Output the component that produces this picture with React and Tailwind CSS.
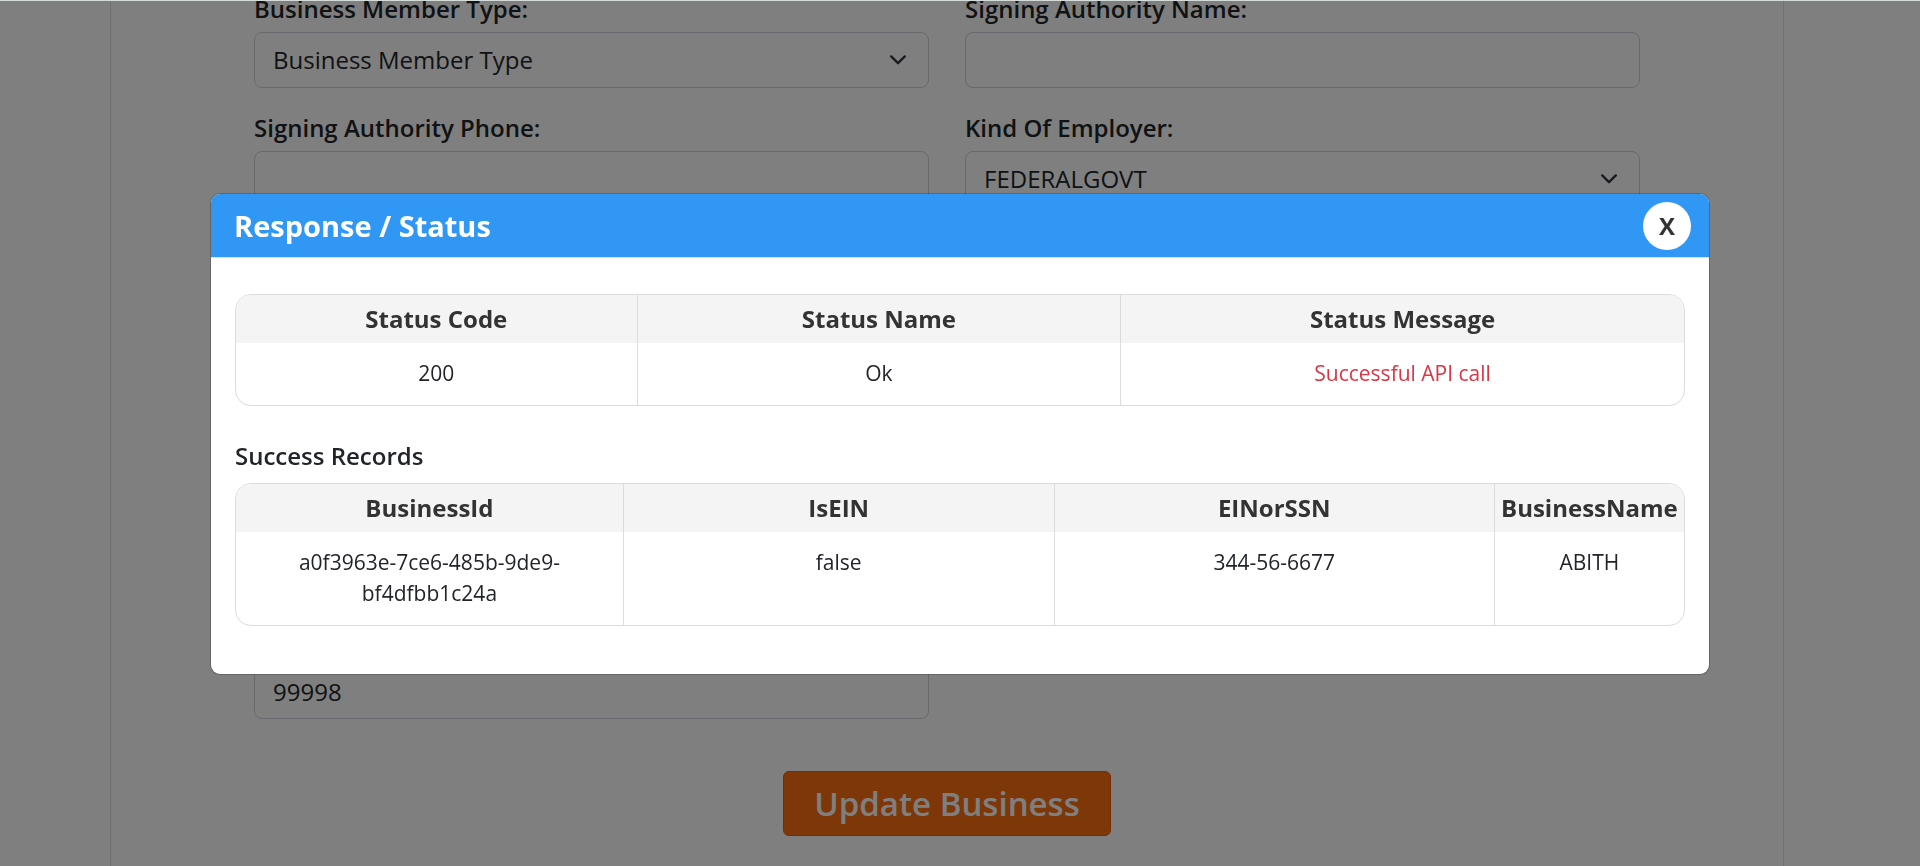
import { useState } from "react";

const controlClass =
  "block h-14 w-full rounded-lg border border-[#ced4da] bg-white px-[18px] text-2xl text-[#212529]";

function Field({ id, label, children }) {
  return (
    <div className="flex flex-col gap-[5px]">
      <label htmlFor={id} className="text-2xl/9 font-semibold text-[#212529]">
        {label}
      </label>
      {children}
    </div>
  );
}

function TextField({ id, label, initial = "" }) {
  return (
    <Field id={id} label={label}>
      <input id={id} type="text" defaultValue={initial} className={controlClass} />
    </Field>
  );
}

function SelectField({ id, label, option }) {
  return (
    <Field id={id} label={label}>
      <div className="relative">
        <select id={id} className={controlClass + " appearance-none"}>
          <option>{option}</option>
        </select>
        <svg
          viewBox="0 0 16 16"
          className="pointer-events-none absolute top-5 right-[23px] size-4"
          fill="none"
          stroke="#343a40"
          strokeWidth="2.4"
          strokeLinecap="round"
          strokeLinejoin="round"
          aria-hidden="true"
        >
          <path d="m1.2 4.4 6.8 6.8 6.8-6.8" />
        </svg>
      </div>
    </Field>
  );
}

function ResultTable({ columns }) {
  return (
    <div className="overflow-hidden rounded-2xl border border-[#dcdcdc]">
      <table className="w-full table-fixed text-center">
        <colgroup>
          {columns.map((c) => (
            <col key={c.title} className={c.width} />
          ))}
        </colgroup>
        <thead>
          <tr className="bg-[#f4f4f4]">
            {columns.map((c) => (
              <th
                key={c.title}
                scope="col"
                className="border-r border-[#dcdcdc] py-1.5 text-2xl/9 font-bold text-[#333] last:border-r-0"
              >
                {c.title}
              </th>
            ))}
          </tr>
        </thead>
        <tbody>
          <tr>
            {columns.map((c) => (
              <td
                key={c.title}
                className={
                  "border-r border-[#dcdcdc] px-3 pt-[15px] pb-4 align-top text-[21px]/[31px] last:border-r-0 " +
                  (c.tone || "text-[#212529]")
                }
              >
                {c.value}
              </td>
            ))}
          </tr>
        </tbody>
      </table>
    </div>
  );
}

const statusColumns = [
  { title: "Status Code", value: "200", width: "w-[27.7%]" },
  { title: "Status Name", value: "Ok", width: "w-[33.4%]" },
  { title: "Status Message", value: "Successful API call", width: "w-[38.9%]", tone: "text-[#dc3545]" },
];

const recordColumns = [
  { title: "BusinessId", value: "a0f3963e-7ce6-485b-9de9-bf4dfbb1c24a", width: "w-[26.75%]" },
  { title: "IsEIN", value: "false", width: "w-[29.75%]" },
  { title: "EINorSSN", value: "344-56-6677", width: "w-[30.4%]" },
  { title: "BusinessName", value: "ABITH", width: "w-[13.1%]" },
];

function ResponseDialog({ onClose }) {
  return (
    <div className="fixed inset-x-0 top-px bottom-0 flex items-center justify-center bg-black/50 pt-px">
      <div
        role="dialog"
        aria-modal="true"
        aria-labelledby="response-title"
        className="w-full max-w-[1500px] overflow-hidden rounded-[10px] border border-black/20 bg-white bg-clip-padding"
      >
        <header className="flex h-16 items-center justify-between border-b border-[#dee2e6] bg-[#3097f4] pt-px pr-[18px] pl-[23px]">
          <h2 id="response-title" className="text-[29px]/[42px] font-bold text-white">
            Response / Status
          </h2>
          <button
            type="button"
            aria-label="X"
            onClick={onClose}
            className="size-12 rounded-full bg-white text-2xl font-bold text-[#333]"
          >
            X
          </button>
        </header>
        <div className="px-6 pt-9 pb-12">
          <ResultTable columns={statusColumns} />
          <h3 className="mt-8 mb-[9px] text-2xl/9 font-semibold text-[#212529]">Success Records</h3>
          <ResultTable columns={recordColumns} />
        </div>
      </div>
    </div>
  );
}

export default function App() {
  const [open, setOpen] = useState(true);

  return (
    <div className="h-screen overflow-hidden border-t border-[#d5dbd9] bg-white pr-[26px] font-['Open_Sans',sans-serif]">
      <form className="mx-auto flex h-full max-w-[1674px] flex-col justify-between border-x border-[#dee2e6] px-[143px] pb-[30px]">
        <div className="-mt-2.5 grid grid-cols-2 gap-x-9 gap-y-[22px]">
          <SelectField id="member-type" label="Business Member Type:" option="Business Member Type" />
          <TextField id="signing-name" label="Signing Authority Name:" />
          <TextField id="signing-phone" label="Signing Authority Phone:" />
          <SelectField id="employer-kind" label="Kind Of Employer:" option="FEDERALGOVT" />
        </div>
        <div>
          <div className="grid grid-cols-2 gap-x-9">
            <TextField id="zip" label="Zip Code:" initial="99998" />
          </div>
          <div className="mt-[52px] flex justify-center">
            <button
              type="submit"
              className="rounded-md border border-[#e05f08] bg-[#fb6e10] px-[30px] py-[7px] text-[33px]/[49px] font-semibold text-white"
            >
              Update Business
            </button>
          </div>
        </div>
      </form>
      {open && <ResponseDialog onClose={() => setOpen(false)} />}
    </div>
  );
}
